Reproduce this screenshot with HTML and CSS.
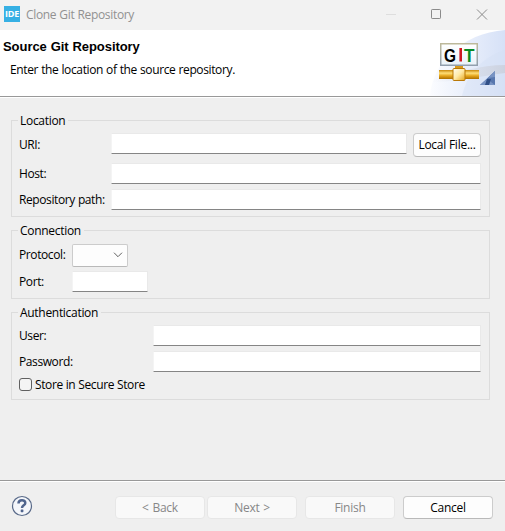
FILE: index.html
```html
<!DOCTYPE html>
<html lang="en">
<head>
<meta charset="utf-8">
<title>Clone Git Repository</title>
<link rel="stylesheet" href="styles.css">
</head>
<body>
<div class="dialog">
  <div class="titlebar">
    <span class="app-icon">IDE</span>
    <span class="window-title">Clone Git Repository</span>
    <svg class="window-controls" width="110" height="30" viewBox="0 0 110 30" fill="none">
      <path d="M1 14.500h10" stroke="#dedede"/>
      <rect x="46.500" y="9.500" width="9" height="9" rx=".7" stroke="#8b8b8b"/>
      <path d="M92 9.500l10 10M102 9.500l-10 10" stroke="#8b8b8b"/>
    </svg>
  </div>
  <header class="banner">
    <div class="banner-text">
      <h1>Source Git Repository</h1>
      <p>Enter the location of the source repository.</p>
    </div>
    <svg class="banner-art" width="75" height="66" viewBox="0 0 75 66">
      <defs>
        <linearGradient id="sky" x1="0" x2="1"><stop stop-color="#fbfcff"/><stop offset="1" stop-color="#d6e1f7"/></linearGradient>
        <linearGradient id="gold" x1="0" y1="0" x2="0" y2="1"><stop stop-color="#c8870c"/><stop offset=".35" stop-color="#ffdf78"/><stop offset=".65" stop-color="#e5a51c"/><stop offset="1" stop-color="#ad6f00"/></linearGradient>
        <linearGradient id="hub" x1="0" y1="0" x2="1" y2="1"><stop stop-color="#fffdf0"/><stop offset=".5" stop-color="#ffe9a6"/><stop offset="1" stop-color="#e5a51c"/></linearGradient>
        <linearGradient id="shade" x1="0" x2="1"><stop stop-color="#dfe1e8" stop-opacity="0"/><stop offset="1" stop-color="#ccd2e0"/></linearGradient>
        <linearGradient id="panel" x1="0" y1="0" x2="0" y2="1"><stop stop-color="#fff"/><stop offset="1" stop-color="#e9f2f9"/></linearGradient>
        <linearGradient id="frame" x1="0" y1="0" x2="0" y2="1"><stop stop-color="#bdb99b"/><stop offset="1" stop-color="#929fae"/></linearGradient>
      </defs>
      <path d="M0 66C2 34 32 3 75 0v66z" fill="url(#sky)"/>
      <path d="M32 66C37 43 54 26 75 20v46z" fill="#d5dff5" opacity=".45"/>
      <path d="M2 50C26 42 51 35 75 35v8C50 46 27 52 2 52z" fill="url(#shade)"/>
      <rect x="15" y="34" width="8" height="8" fill="url(#gold)" opacity="0"/>
      <rect x="9" y="40" width="40" height="9" fill="url(#gold)"/>
      <rect x="25" y="35" width="8" height="4" fill="#d99b1d"/>
      <rect x="23" y="38.500" width="12" height="12" rx="1" fill="url(#hub)" stroke="#b97808"/>
      <rect x="10.750" y="13.750" width="36.500" height="21.500" fill="url(#panel)" stroke="url(#frame)" stroke-width="1.500"/>
      <text class="git" x="14" y="31.500" textLength="12" lengthAdjust="spacingAndGlyphs">G</text>
      <path d="M30.700 18v13.500" stroke="#cf1720" stroke-width="2.600"/>
      <text class="git git-t" x="34" y="31.500" textLength="10.500" lengthAdjust="spacingAndGlyphs">T</text>
      <path d="M65 41v14H50z" fill="#5877ae"/>
      <path d="M65 41v6l-7 1zM57 49l8 6H50z" fill="#7893c3"/>
      <path d="M57 49h4l-2 6h-4z" fill="#304f87"/>
    </svg>
  </header>

  <main class="content">
    <section class="group location">
      <h2>Location</h2>
      <div class="row"><label>URI:</label><input class="uri"><button class="local">Local File...</button></div>
      <div class="row host-row"><label>Host:</label><input></div>
      <div class="row"><label>Repository path:</label><input></div>
    </section>
    <section class="group connection">
      <h2>Connection</h2>
      <div class="row protocol-row"><label>Protocol:</label><div class="select"><svg width="10" height="6" viewBox="0 0 10 6" fill="none" stroke="#606060"><path d="M1 .7l4 4 4-4"/></svg></div></div>
      <div class="row"><label>Port:</label><input class="port"></div>
    </section>
    <section class="group authentication">
      <h2>Authentication</h2>
      <div class="row"><label>User:</label><input></div>
      <div class="row"><label>Password:</label><input></div>
      <div class="check"><span class="box"></span><span>Store in Secure Store</span></div>
    </section>
  </main>

  <footer>
    <svg class="help" width="22" height="22" viewBox="0 0 22 22">
      <circle cx="11" cy="11" r="9.500" fill="#f4f6fa" stroke="#596a89" stroke-width="1.200"/>
      <path d="M7.500 8.500C7.500 4.300 14.300 4.300 14.300 7.900c0 2.400-3.300 2.400-3.300 5" fill="none" stroke="#50658e" stroke-width="2.500"/>
      <rect x="9.700" y="14.500" width="2.700" height="2.700" rx=".6" fill="#50658e"/>
    </svg>
    <button disabled>&lt; Back</button>
    <button disabled>Next &gt;</button>
    <button class="finish" disabled>Finish</button>
    <button class="cancel">Cancel</button>
  </footer>
</div>
</body>
</html>
```
FILE: styles.css
```css
* { box-sizing: border-box; }
body { margin: 0; background: #efefef; }
.dialog {
  width: 505px;
  height: 531px;
  display: flex;
  flex-direction: column;
  overflow: hidden;
  background: #efefef;
  color: #000;
  font: 12px/16px "Open Sans", "Noto Sans", sans-serif;
  letter-spacing: -0.4px;
  word-spacing: 0.3px;
}
.titlebar { height: 30px; flex: none; display: flex; align-items: center; background: #f2f2f2; padding-left: 4px; }
.app-icon {
  width: 16px; height: 16px; margin-top: -2px;
  background: #36b0e4; color: #fff;
  font: bold 9px/16px "Open Sans", sans-serif;
  text-align: center; letter-spacing: -0.2px;
}
.window-title { margin-left: 6px; color: #919191; letter-spacing: -0.33px; }
.window-controls { margin-left: auto; margin-right: 10px; }
.banner { height: 67px; flex: none; display: flex; justify-content: space-between; background: #fff; border-bottom: 1px solid #999; }
h1 { margin: 9px 0 0 3px; font: bold 13px/16px "Liberation Sans", sans-serif; letter-spacing: -0.05px; }
.banner p { margin: 7px 0 0 10px; letter-spacing: -0.37px; }
.banner-art { display: block; }
.git { font: bold 19px "Liberation Sans", sans-serif; letter-spacing: 0; }
.git-t { fill: #078a23; }
.content { flex: 1; border-top: 1px solid #fff; padding: 22px 15px 0 11px; }
.group { border: 1px solid #dcdcdc; padding: 0 8px 0 7px; }
.location { height: 97px; }
.connection { height: 69px; margin-top: 13px; }
.authentication { height: 88px; margin-top: 13px; }
h2 { width: max-content; height: 16px; margin: -8px 0 0 -1px; padding: 0 3px 0 2px; background: #efefef; font-size: 12px; line-height: 16px; font-weight: normal; letter-spacing: -0.3px; }
.row { display: flex; height: 22px; margin-bottom: 4px; align-items: center; }
label { width: 92px; flex: none; }
input {
  appearance: none; flex: 1; min-width: 0; height: 21px; margin: 0; padding: 0;
  align-self: flex-start; background: #fff; outline: none;
  border: 1px solid #e9e9e9; border-left-color: #f4f4f4; border-bottom-color: #858585; border-radius: 1px;
}
h2 + .row { margin-top: 4px; }
.uri { flex: none; width: 296px; }
.host-row { margin-top: 8px; }
.location .host-row label, .host-row + .row label { margin-top: -1px; }
.location h2 + .row label { margin-top: 2px; }
button {
  height: 24px; padding: 0; border: 1px solid #ccc; border-bottom-color: #b9b9b9;
  border-radius: 4px; background: #fdfdfd; color: #000;
  font: 12px/16px "Open Sans", sans-serif; letter-spacing: -0.25px;
}
.local { width: 68px; margin-left: 6px; flex: none; align-self: flex-start; }
.connection label { width: 53px; }
.protocol-row { height: 24px; margin-bottom: 4px; }
.select {
  width: 56px; height: 23px; padding-right: 4px; display: flex; align-items: center; justify-content: flex-end;
  background: #fdfdfd; border: 1px solid #ccc; border-bottom-color: #b9b9b9; border-radius: 2px;
}
.port { flex: none; width: 76px; }
.authentication label { width: 134px; }
.check { display: flex; align-items: center; height: 16px; margin-top: -1px; }
.box { width: 13px; height: 13px; margin-right: 3px; border: 1px solid #606060; border-radius: 3px; background: #f4f4f4; }
.check span:last-child { position: relative; top: 1px; }
footer { height: 51px; flex: none; display: flex; align-items: flex-start; padding: 15px 12px 0 11px; border-top: 1px solid #999; box-shadow: inset 0 1px #fff; }
.help { flex: none; margin-right: 82px; margin-top: -1px; }
footer button { width: 90px; height: 23px; margin-right: 2px; flex: none; word-spacing: 0.8px; }
footer button:disabled { color: #878787; background: #f9f9f9; border-color: #e7e7e7; }
.finish { margin-left: 6px; }
.cancel { margin-left: 6px; margin-right: 0; }
```
